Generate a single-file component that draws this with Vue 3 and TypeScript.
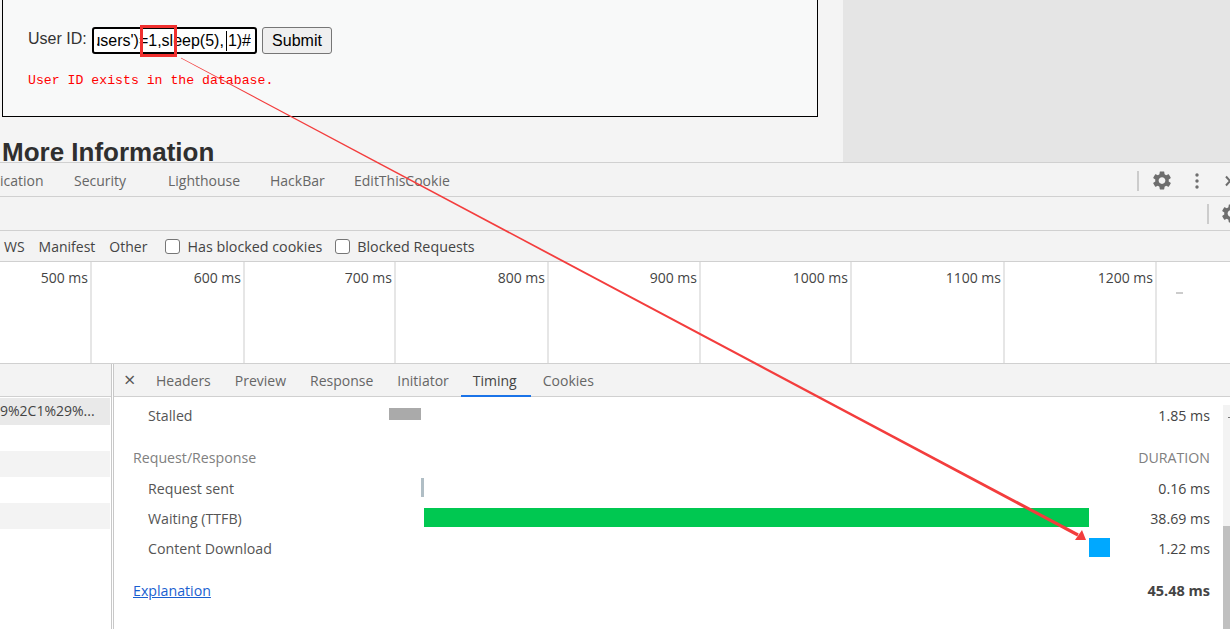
<script setup lang="ts">
const mainTabs = [
  { label: 'ication', w: 74 },
  { label: 'Security', w: 94 },
  { label: 'Lighthouse', w: 102 },
  { label: 'HackBar', w: 84 },
  { label: 'EditThisCookie', w: 110 },
]
const ticks = [
  { label: '500 ms', w: 92 },
  { label: '600 ms', w: 153 },
  { label: '700 ms', w: 151 },
  { label: '800 ms', w: 153 },
  { label: '900 ms', w: 152 },
  { label: '1000 ms', w: 151 },
  { label: '1100 ms', w: 153 },
  { label: '1200 ms', w: 152 },
]
const detailTabs = ['Headers', 'Preview', 'Response', 'Initiator', 'Timing', 'Cookies']
const gearPath =
  'M19.14 12.94c.04-.3.06-.61.06-.94 0-.32-.02-.64-.07-.94l2.03-1.58c.18-.14.23-.41.12-.61l-1.92-3.32c-.12-.22-.37-.29-.59-.22l-2.39.96c-.5-.38-1.03-.7-1.62-.94l-.36-2.54c-.04-.24-.24-.41-.48-.41h-3.84c-.24 0-.43.17-.47.41l-.36 2.54c-.59.24-1.13.57-1.62.94l-2.39-.96c-.22-.08-.47 0-.59.22L2.74 8.87c-.12.21-.08.47.12.61l2.03 1.58c-.05.3-.09.63-.09.94s.02.64.07.94l-2.03 1.58c-.18.14-.23.41-.12.61l1.92 3.32c.12.22.37.29.59.22l2.39-.96c.5.38 1.03.7 1.62.94l.36 2.54c.05.24.24.41.48.41h3.84c.24 0 .44-.17.47-.41l.36-2.54c.59-.24 1.13-.56 1.62-.94l2.39.96c.22.08.47 0 .59-.22l1.92-3.32c.12-.22.07-.47-.12-.61l-2.01-1.58zM12 15.6c-1.98 0-3.6-1.62-3.6-3.6s1.62-3.6 3.6-3.6 3.6 1.62 3.6 3.6-1.62 3.6-3.6 3.6z'
</script>

<template>
  <div class="screen">
    <section class="page">
      <div class="content">
        <div class="vuln-box">
          <div class="form-row">
            <span class="field-label">User ID:</span>
            <div class="fake-input"><div class="input-clip"><span class="input-text">users')=1,sleep(5),<i class="caret"></i>1)#</span></div></div>
            <button class="submit" type="button">Submit</button>
          </div>
          <pre class="result">User ID exists in the database.</pre>
        </div>
        <h2 class="more">More Information</h2>
      </div>
      <aside class="side"></aside>
    </section>

    <section class="devtools">
      <div class="bar tabs-bar">
        <span v-for="t in mainTabs" :key="t.label" class="main-tab" :style="{ width: t.w + 'px' }">{{ t.label }}</span>
        <span class="spacer"></span>
        <span class="vsep"></span>
        <svg class="gear" viewBox="2.4 2 19.2 20" width="18" height="19"><path :d="gearPath" fill="#6e6e6e" fill-rule="evenodd" /></svg>
        <svg class="dots" viewBox="0 0 4 18" width="4" height="18"><circle cx="2" cy="3" r="1.700" /><circle cx="2" cy="9" r="1.700" /><circle cx="2" cy="15" r="1.700" /></svg>
        <svg class="close-x" viewBox="0 0 10 12" width="10" height="12"><path d="M1 1.500 9 10.500M9 1.500 1 10.500" stroke="#6e6e6e" stroke-width="2" fill="none" /></svg>
      </div>
      <div class="bar tool-bar">
        <span class="spacer"></span>
        <span class="vsep"></span>
        <svg class="gear gear-clip" viewBox="2.4 2 19.2 20" width="18" height="19"><path :d="gearPath" fill="#6e6e6e" fill-rule="evenodd" /></svg>
      </div>
      <div class="bar filter-bar">
        <span class="f ws">WS</span>
        <span class="f">Manifest</span>
        <span class="f">Other</span>
        <label class="check first"><i class="box"></i>Has blocked cookies</label>
        <label class="check"><i class="box"></i>Blocked Requests</label>
      </div>
      <div class="timeline">
        <div v-for="t in ticks" :key="t.label" class="tick" :style="{ width: t.w + 'px' }">{{ t.label }}</div>
        <div class="dash"></div>
      </div>
      <div class="split">
        <div class="names">
          <div class="name-row head"></div>
          <div class="name-row selected">9%2C1%29%...</div>
          <div class="name-row"></div>
          <div class="name-row alt"></div>
          <div class="name-row"></div>
          <div class="name-row alt"></div>
        </div>
        <div class="detail">
          <div class="detail-tabs">
            <span class="x">×</span>
            <span v-for="d in detailTabs" :key="d" class="d-tab" :class="{ on: d === 'Timing' }">{{ d }}</span>
          </div>
          <div class="detail-body">
            <div class="timing">
              <div class="t-row stalled">
                <span class="t-name">Stalled</span>
                <span class="track"><i class="seg gray"></i></span>
                <span class="t-val">1.85 ms</span>
              </div>
              <div class="t-head"><span>Request/Response</span><span class="dur">DURATION</span></div>
              <div class="t-row">
                <span class="t-name">Request sent</span>
                <span class="track"><i class="seg sent"></i></span>
                <span class="t-val">0.16 ms</span>
              </div>
              <div class="t-row">
                <span class="t-name">Waiting (TTFB)</span>
                <span class="track"><i class="seg green"></i></span>
                <span class="t-val">38.69 ms</span>
              </div>
              <div class="t-row">
                <span class="t-name">Content Download</span>
                <span class="track"><i class="seg blue"></i></span>
                <span class="t-val">1.22 ms</span>
              </div>
              <div class="t-foot"><a class="link">Explanation</a><b>45.48 ms</b></div>
            </div>
            <div class="scroll"><i class="tip"></i><i class="thumb"></i></div>
          </div>
        </div>
      </div>
    </section>

    <svg class="overlay" viewBox="0 0 1230 629" width="1230" height="629">
      <rect x="141.500" y="26.500" width="34" height="29" fill="none" stroke="#f0302f" stroke-width="3" />
      <polygon points="180.800,58.350 181.190,57.650 1078.750,533.590 1077.250,536.410" fill="#f33d3d" />
      <polygon points="1086,540 1075,540 1082,530" fill="#f33d3d" />
    </svg>
  </div>
</template>

<style>
html, body { margin: 0; background: #fff; }
</style>

<style scoped>
.screen { position: relative; width: 1230px; height: 629px; overflow: hidden; font-family: "Open Sans", "Noto Sans", sans-serif; }
.page { display: flex; height: 162px; background: #f4f4f4; overflow: hidden; }
.content { width: 843px; }
.side { width: 387px; background: #e5e5e5; }
.vuln-box { box-sizing: border-box; width: 816px; height: 118px; margin: -1px 0 0 2px; padding: 27px 25px 0; background: #f8f9f9; border: 1px solid #000; font-family: "Liberation Sans", Arial, sans-serif; }
.form-row { display: flex; align-items: flex-start; height: 27px; }
.field-label { font-size: 16px; line-height: 18px; margin-top: 3px; color: #333; width: 64px; }
.fake-input { box-sizing: border-box; width: 165px; height: 27px; border: 2px solid #000; border-radius: 3px; background: #fff; padding: 0 4px 0 3px; }
.input-clip { display: flex; justify-content: flex-end; overflow: hidden; height: 23px; }
.input-text { flex: none; font-size: 16px; line-height: 23px; white-space: nowrap; color: #000; }
.caret { display: inline-block; width: 1px; height: 20px; margin: 0 1px 0 2px; background: #000; vertical-align: -5px; }
.submit { box-sizing: border-box; width: 70px; height: 27px; margin-left: 5px; padding: 0; font: 16px "Liberation Sans", Arial, sans-serif; color: #000; background: #efefef; border: 1px solid #767676; border-radius: 3px; }
.result { margin: 18px 0 0; font: 13.200px/18px "Liberation Mono", monospace; color: #f00; }
.more { margin: 25px 0 0 2px; font: bold 26px/20px "Liberation Sans", Arial, sans-serif; color: #2f2f2f; white-space: nowrap; }

.devtools { display: flex; flex-direction: column; height: 467px; color: #555; font-size: 14px; }
.bar { display: flex; align-items: center; background: #f3f3f3; border-top: 1px solid #d0d0d0; box-sizing: border-box; white-space: nowrap; overflow: hidden; }
.tabs-bar { height: 34px; color: #666; padding-top: 2px; }
.tool-bar { height: 34px; }
.filter-bar { height: 32px; border-bottom: 1px solid #d0d0d0; color: #444; }
.main-tab { display: block; flex: none; }
.spacer { flex: 1; }
.vsep { flex: none; width: 2px; height: 20px; background: #ccc; }
.gear { flex: none; margin-left: 14px; }
.dots { flex: none; margin-left: 24px; fill: #6e6e6e; }
.close-x { flex: none; margin-left: 26px; margin-right: -5px; }
.gear-clip { margin-left: 13px; margin-right: -10px; }
.f { margin-right: 14px; }
.ws { margin-left: 4px; }
.check { display: flex; align-items: center; font-size: 14.300px; }
.first { margin-left: 4px; margin-right: 13px; }
.box { box-sizing: border-box; width: 15px; height: 15px; border: 1px solid #767676; border-radius: 3px; background: #fff; margin-right: 7px; }

.timeline { display: flex; height: 101px; background: #fff; flex: none; }
.tick { box-sizing: border-box; border-right: 2px solid #e6e6e6; text-align: right; padding: 5px 2px 0 0; font-size: 14px; line-height: 22px; color: #444; white-space: nowrap; flex: none; }
.dash { width: 7px; height: 2px; background: #ccc; margin: 30px 0 0 19px; }

.split { flex: 1; display: flex; border-top: 1px solid #d0d0d0; min-height: 0; }
.names { width: 110px; margin-right: 1px; flex: none; }
.name-row { height: 26px; color: #444; line-height: 26px; white-space: nowrap; overflow: hidden; }
.name-row.head { height: 32px; width: 111px; margin-bottom: 1px; background: #f3f3f3; border-bottom: 1px solid #d0d0d0; }
.name-row.selected { height: 27px; background: #e9e9e9; }
.name-row.alt { background: #f3f3f3; }
.detail { flex: 1; display: flex; flex-direction: column; border-left: 3px double #c8c8c8; min-width: 0; }
.detail-tabs { display: flex; align-items: center; height: 33px; flex: none; box-sizing: border-box; background: #f3f3f3; border-bottom: 1px solid #d0d0d0; color: #666; }
.x { width: 20px; margin-left: 10px; font-size: 20px; line-height: 20px; color: #555; }
.d-tab { padding: 0 12px; height: 33px; line-height: 34px; box-sizing: border-box; }
.d-tab.on { padding-right: 14px; border-bottom: 2px solid #1a73e8; color: #444; }
.detail-body { flex: 1; display: flex; background: #fff; min-height: 0; }
.timing { flex: 1; padding: 7px 13px 0 19px; font-size: 14.200px; }
.t-row { display: flex; align-items: center; height: 30px; padding-left: 15px; }
.t-name { width: 241px; flex: none; color: #555; }
.track { flex: 1; position: relative; height: 19px; display: block; }
.t-val { color: #444; }
.seg { position: absolute; top: -1px; height: 19px; display: block; }
.gray { left: 0; width: 32px; height: 12px; top: 0; background: #aaa; }
.sent { left: 32px; width: 3px; background: #b0bec5; }
.green { left: 35px; width: 665px; background: #00c851; }
.blue { left: 700px; width: 21px; background: #00a8ff; }
.stalled { height: 22px; }
.stalled .gray { top: 2px; }
.t-head { display: flex; justify-content: space-between; margin-top: 21px; height: 26px; line-height: 22px; color: #808080; }
.dur { color: #808080; }
.t-foot { display: flex; justify-content: space-between; margin-top: 16px; line-height: 24px; color: #444; }
.t-foot b { font-size: 14.500px; }
.link { color: #1a5fd0; text-decoration: underline; }
.scroll { width: 7px; flex: none; background: #f3f3f3; position: relative; margin-top: 8px; }
.tip { position: absolute; left: 5px; top: 12px; width: 2px; height: 1px; background: #777; display: block; }
.thumb { position: absolute; left: 0; right: 0; top: 121px; bottom: 0; background: #c0c0c0; display: block; }
.overlay { position: absolute; inset: 0; pointer-events: none; }
</style>
